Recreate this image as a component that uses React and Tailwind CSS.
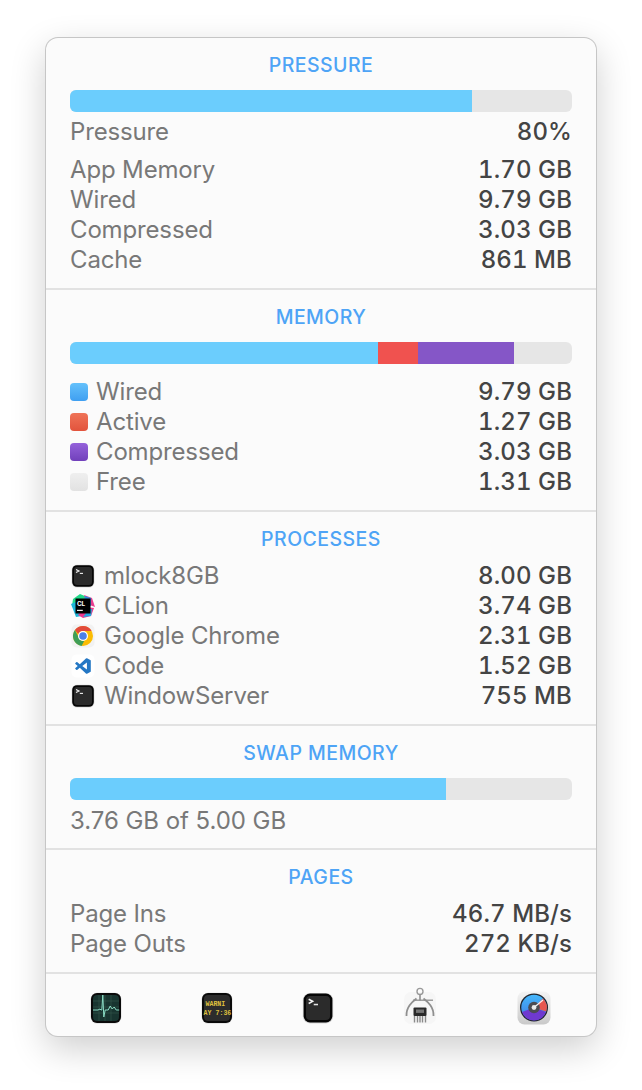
import React from "react";

function TermIcon({ size = 24 }) {
  return (
    <svg width={size} height={size} viewBox="0 0 24 24" className="shrink-0">
      <rect x="0.6" y="0.8" width="22.8" height="22.8" rx="5.4" fill="#b9b9b9" opacity="0.55" />
      <rect x="1.2" y="1.2" width="21.6" height="21.6" rx="4.8" fill="#050505" />
      <rect x="3" y="3" width="18" height="18" rx="3" fill="#2b2b2b" />
      <path d="M5 5.4l3 1.6-3 1.6" fill="none" stroke="#f4f4f4" strokeWidth="1.15" />
      <path d="M8.8 9.4h3.2" stroke="#e4e4e4" strokeWidth="1.15" />
    </svg>
  );
}
function CLionIcon() {
  return (
    <svg width="26" height="26" viewBox="0 0 26 26" className="shrink-0 -m-px">
      <path d="M3 6l7-5 7 3-10 12-5-3z" fill="#21d789" />
      <path d="M14 2l8 3 3 9-8-3z" fill="#e73e8f" />
      <path d="M15 3l6 2 0 8-7-3z" fill="#2f8ce0" />
      <path d="M1 11l5-2 6 14-6 1z" fill="#1fb6d9" />
      <path d="M8 22l8-8 8 1-3 8-8 2z" fill="#ed358c" />
      <path d="M13 24l6-8 3 0-1 7z" fill="#22a6e0" />
      <rect x="5.5" y="5.5" width="15" height="15" fill="#000" />
      <text x="7" y="13" fontFamily="Inter, sans-serif" fontWeight="700" fontSize="6.4" fill="#fff">CL</text>
      <rect x="7" y="16.8" width="5.8" height="1.1" fill="#fff" />
    </svg>
  );
}
function ChromeIcon() {
  return (
    <svg width="24" height="24" viewBox="0 0 24 24" className="shrink-0">
      <rect x="0.5" y="0.5" width="23" height="23" rx="5" fill="#f2f2f2" />
      <circle cx="12" cy="12" r="10" fill="#fbbc04" />
      <path d="M12 2a10 10 0 0 1 8.66 5H12a5 5 0 0 0-4.6 3L3.9 6.1A10 10 0 0 1 12 2z" fill="#e24a3b" />
      <path d="M3.9 6.1L8 13.9A5 5 0 0 0 13.3 16.8L10.6 21.9A10 10 0 0 1 3.9 6.1z" fill="#3f9e57" />
      <circle cx="12" cy="12" r="5" fill="#fff" />
      <circle cx="12" cy="12" r="3.8" fill="#4a80e8" />
    </svg>
  );
}
function CodeIcon() {
  return (
    <svg width="24" height="24" viewBox="0 0 24 24" className="shrink-0">
      <rect x="0.5" y="0.5" width="23" height="23" rx="5" fill="#ffffff" />
      <g transform="translate(4.2 4.2) scale(0.65)">
        <path
          d="M23.15 2.587L18.21.21a1.494 1.494 0 0 0-1.705.29l-9.46 8.63-4.12-3.128a.999.999 0 0 0-1.276.057L.327 7.261A1 1 0 0 0 .326 8.74L3.899 12 .326 15.26a1 1 0 0 0 .001 1.479L1.65 17.94a.999.999 0 0 0 1.276.057l4.12-3.128 9.46 8.63a1.492 1.492 0 0 0 1.704.29l4.942-2.377A1.5 1.5 0 0 0 24 20.06V3.939a1.5 1.5 0 0 0-.85-1.352zm-5.146 14.861L10.826 12l7.178-5.448v10.896z"
          fill="#2477c4"
        />
      </g>
    </svg>
  );
}
function MonitorIcon() {
  return (
    <svg width="32" height="32" viewBox="0 0 32 32">
      <rect x="0.6" y="0.8" width="30.8" height="30.8" rx="6.5" fill="#aaa" opacity="0.5" />
      <rect x="1" y="1" width="30" height="30" rx="6" fill="#0a0a0a" />
      <rect x="3" y="3" width="26" height="26" rx="4" fill="#183530" />
      <path d="M3 9h26M3 15h26M3 21h26M9 3v26M15 3v26M21 3v26" stroke="#38594f" strokeWidth="0.6" />
      <path d="M3 18h5l2-1 1 1 .8 0 1-15 1 22 1.4-7h3l2-4 2 3 2-2 2 3h3" fill="none" stroke="#8adcc4" strokeWidth="1" />
    </svg>
  );
}
function ConsoleIcon() {
  return (
    <svg width="32" height="32" viewBox="0 0 32 32">
      <rect x="0.6" y="0.8" width="30.8" height="30.8" rx="6.5" fill="#aaa" opacity="0.5" />
      <rect x="1" y="1" width="30" height="30" rx="6" fill="#0a0a0a" />
      <rect x="3" y="3" width="26" height="26" rx="4" fill="#2c2c2c" />
      <text x="4.5" y="14" fontFamily="'Liberation Mono', monospace" fontWeight="700" fontSize="6.6" fill="#dfc03e">WARNI</text>
      <text x="2.6" y="22.5" fontFamily="'Liberation Mono', monospace" fontWeight="700" fontSize="6.6" fill="#dfc03e">AY 7:36</text>
    </svg>
  );
}
function CaliperIcon() {
  return (
    <svg width="34" height="38" viewBox="0 0 34 38">
      <rect x="1" y="5" width="32" height="32" rx="7" fill="#f6f6f6" />
      <circle cx="17" cy="4.4" r="3" fill="none" stroke="#9a9a9a" strokeWidth="1.4" />
      <path d="M17 7.5v6" stroke="#8f8f8f" strokeWidth="1.6" />
      <path d="M10 13.2h20" stroke="#8f8f8f" strokeWidth="1.3" />
      <path d="M13.5 11.5C9 15 3 20 3.5 29" fill="none" stroke="#8f8f8f" strokeWidth="1.8" />
      <path d="M20.5 11.5C25 15 31 20 30.5 29" fill="none" stroke="#8f8f8f" strokeWidth="1.8" />
      <rect x="10.5" y="20.5" width="13" height="8.5" rx="1" fill="#2a2a2a" />
      <rect x="13" y="22.5" width="8" height="3.4" fill="#777" />
      <path d="M11.5 29v6.5M14.5 29v6.5M17 29v6.5M19.5 29v6.5M22.5 29v6.5" stroke="#8a8a8a" strokeWidth="1.4" />
    </svg>
  );
}
function GaugeIcon() {
  return (
    <svg width="34" height="34" viewBox="0 0 34 34">
      <defs>
        <linearGradient id="gb" x1="0" y1="0" x2="0" y2="1">
          <stop offset="0" stopColor="#f4f4f4" />
          <stop offset="1" stopColor="#c9c9c9" />
        </linearGradient>
        <linearGradient id="gs" x1="0" y1="0" x2="0" y2="1">
          <stop offset="0" stopColor="#45b7fb" />
          <stop offset="1" stopColor="#3f7ae0" />
        </linearGradient>
      </defs>
      <rect x="0.5" y="0.5" width="33" height="33" rx="7" fill="url(#gb)" />
      <circle cx="17" cy="16.5" r="14" fill="#20242c" />
      <circle cx="17" cy="16.5" r="12.7" fill="url(#gs)" />
      <path d="M17 16.5L5 21a12.7 12.7 0 0 0 24 0z" fill="#6f39cf" />
      <path d="M17 16.5L26 7.5a12.7 12.7 0 0 1 3.2 13z" fill="#e8574f" />
      <circle cx="17" cy="16.5" r="5.8" fill="#4b4b52" />
      <circle cx="17" cy="16.5" r="2.4" fill="#e6e6e6" />
      <path d="M17 16.5L26 9" stroke="#f2f2f2" strokeWidth="1.2" />
    </svg>
  );
}

function Title({ children }) {
  return (
    <div className="text-center text-[19.5px] leading-[28px] font-medium text-[#4ea4f6] tracking-[0.45px]">{children}</div>
  );
}
function Row({ label, value, swatch, icon }) {
  return (
    <div className="flex items-center justify-between h-[30px] text-[24px] leading-[30px]">
      <div className="flex items-center text-[#787878] tracking-[-0.15px]">
        {swatch && <span className={`w-[18px] h-[18px] rounded-[4px] mr-[8px] ${swatch}`} />}
        {icon && <span className="w-[26px] mr-[8px] flex justify-center">{icon}</span>}
        <span>{label}</span>
      </div>
      <span className="text-[#444444] tabular-nums tracking-[0.1px] font-[450]">{value}</span>
    </div>
  );
}
function Section({ children, className = "" }) {
  return <section className={`px-6 border-b-2 border-[#e2e2e2] ${className}`}>{children}</section>;
}

export default function App() {
  return (
    <div className="w-[642px] h-[1090px] bg-white pt-[38px] pl-[46px] font-['Inter','Liberation_Sans',sans-serif] overflow-hidden">
      <div className="w-[550px] h-[998px] rounded-[12px] bg-[#fbfbfb] ring-1 ring-[#c6c6c6] shadow-[0_12px_36px_rgba(0,0,0,0.2)] flex flex-col overflow-hidden">
        <Section className="h-[252px] pt-[13px]">
          <Title>PRESSURE</Title>
          <div className="mt-[11px] h-[22px] rounded-[6px] bg-[#e6e6e6] overflow-hidden flex">
            <div className="w-[402px] bg-[#6bcdfd]" />
          </div>
          <div className="mt-[5px] mb-[8px]"><Row label="Pressure" value="80%" /></div>
          <Row label="App Memory" value="1.70 GB" />
          <Row label="Wired" value="9.79 GB" />
          <Row label="Compressed" value="3.03 GB" />
          <Row label="Cache" value="861 MB" />
        </Section>
        <Section className="h-[222px] pt-[13px]">
          <Title>MEMORY</Title>
          <div className="mt-[11px] h-[22px] rounded-[6px] bg-[#e6e6e6] overflow-hidden flex mb-[13px]">
            <div className="w-[308px] bg-[#6bcdfd]" />
            <div className="w-[40px] bg-[#f0524f]" />
            <div className="w-[96px] bg-[#8556c7]" />
          </div>
          <Row label="Wired" value="9.79 GB" swatch="bg-gradient-to-b from-[#64c1fb] to-[#3f9ff1]" />
          <Row label="Active" value="1.27 GB" swatch="bg-gradient-to-b from-[#ef7358] to-[#e2533c]" />
          <Row label="Compressed" value="3.03 GB" swatch="bg-gradient-to-b from-[#9562db] to-[#7140bb]" />
          <Row label="Free" value="1.31 GB" swatch="bg-gradient-to-b from-[#efefef] to-[#e2e2e2]" />
        </Section>
        <Section className="h-[214px] pt-[13px]">
          <Title>PROCESSES</Title>
          <div className="mt-[8px]">
            <Row label="mlock8GB" value="8.00 GB" icon={<TermIcon />} />
            <Row label="CLion" value="3.74 GB" icon={<CLionIcon />} />
            <Row label="Google Chrome" value="2.31 GB" icon={<ChromeIcon />} />
            <Row label="Code" value="1.52 GB" icon={<CodeIcon />} />
            <Row label="WindowServer" value="755 MB" icon={<TermIcon />} />
          </div>
        </Section>
        <Section className="h-[124px] pt-[13px]">
          <Title>SWAP MEMORY</Title>
          <div className="mt-[11px] h-[22px] rounded-[6px] bg-[#e6e6e6] overflow-hidden flex">
            <div className="w-[376px] bg-[#6bcdfd]" />
          </div>
          <div className="mt-[6px] text-[24px] leading-[30px] text-[#787878] tracking-[-0.05px]">3.76 GB of 5.00 GB</div>
        </Section>
        <Section className="h-[124px] pt-[13px]">
          <Title>PAGES</Title>
          <div className="mt-[8px]">
            <Row label="Page Ins" value="46.7 MB/s" />
            <Row label="Page Outs" value="272 KB/s" />
          </div>
        </Section>
        <footer className="flex-1 flex items-center pl-[44px] pt-[6px]">
          <div className="w-[32px] flex justify-center"><MonitorIcon /></div>
          <div className="w-[32px] ml-[79px] flex justify-center"><ConsoleIcon /></div>
          <div className="w-[32px] ml-[69px] flex justify-center"><TermIcon size={32} /></div>
          <div className="w-[34px] ml-[69px] flex justify-center -mt-[4px]"><CaliperIcon /></div>
          <div className="w-[34px] ml-[80px] flex justify-center"><GaugeIcon /></div>
        </footer>
      </div>
    </div>
  );
}
